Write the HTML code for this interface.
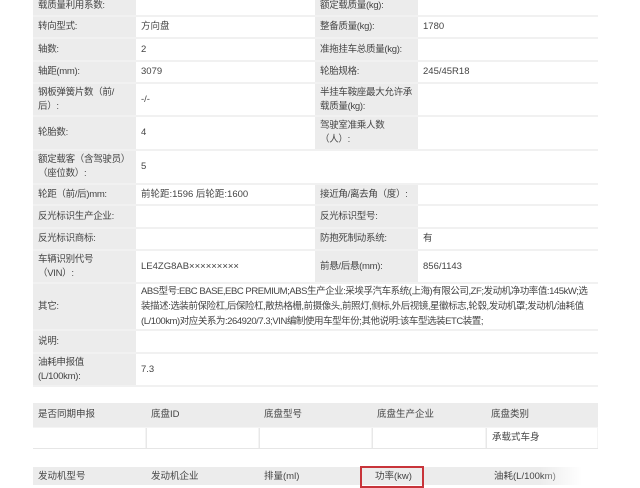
<!DOCTYPE html>
<html><head><meta charset="utf-8"><style>
body{margin:0;width:640px;height:485px;overflow:hidden;background:#fff;font-family:"Liberation Sans","Noto Sans CJK SC",sans-serif;font-size:9.5px;color:#444;position:relative}
.c{position:absolute;box-sizing:border-box;padding:0 5px;display:flex;align-items:center;line-height:14px;overflow:hidden}
.l{background:#ececec;white-space:nowrap;letter-spacing:-0.3px;padding:0 3px 0 5px}
.v{background:#fff}
.o{letter-spacing:-0.45px;line-height:15px}
.line{position:absolute;left:33px;width:565px;height:2px;background:#f1f1f1}
</style></head><body>
<div style="position:absolute;left:597px;top:0;width:1px;height:385px;background:#e4e4e4"></div>
<div id="t"></div>
<script>
var rows=[
[-3,15,"载质量利用系数:","","额定载质量(kg):",""],
[17,37,"转向型式:","方向盘","整备质量(kg):","1780"],
[39,60,"轴数:","2","准拖挂车总质量(kg):",""],
[62,82,"轴距(mm):","3079","轮胎规格:","245/45R18"],
[84,115,"钢板弹簧片数（前/<br>后）:","-/-","半挂车鞍座最大允许承<br>载质量(kg):",""],
[117,149,"轮胎数:","4","驾驶室准乘人数<br>（人）:",""],
[151,183,"额定载客（含驾驶员）<br>（座位数）:","5",null,null],
[185,204,"轮距（前/后)mm:","前轮距:1596 后轮距:1600","接近角/离去角（度）:",""],
[206,227,"反光标识生产企业:","","反光标识型号:",""],
[229,249,"反光标识商标:","","防抱死制动系统:","有"],
[251,282,"车辆识别代号<br>（VIN）:","LE4ZG8AB×××××××××","前悬/后悬(mm):","856/1143"],
[284,329,"其它:","<span class='o'>ABS型号:EBC BASE,EBC PREMIUM;ABS生产企业:采埃孚汽车系统(上海)有限公司,ZF;发动机净功率值:145kW;选装描述:选装前保险杠,后保险杠,散热格栅,前摄像头,前照灯,侧标,外后视镜,星徽标志,轮毂,发动机罩;发动机/油耗值(L/100km)对应关系为:264920/7.3;VIN编制使用车型年份;其他说明:该车型选装ETC装置;</span>",null,null],
[331,352,"说明:","",null,null],
[354,385,"油耗申报值<br>(L/100km):","7.3",null,null]];
var h="";
rows.forEach(function(r){var t=r[0],hh=r[1]-r[0];
h+='<div class="c l" style="left:33px;top:'+t+'px;width:103px;height:'+hh+'px">'+r[2]+'</div>';
if(r[4]===null){h+='<div class="c v" style="left:136px;top:'+t+'px;width:462px;height:'+hh+'px">'+r[3]+'</div>';}
else{h+='<div class="c v" style="left:136px;top:'+t+'px;width:179px;height:'+hh+'px">'+r[3]+'</div>';
h+='<div class="c l" style="left:315px;top:'+t+'px;width:103px;height:'+hh+'px">'+r[4]+'</div>';
h+='<div class="c v" style="left:418px;top:'+t+'px;width:180px;height:'+hh+'px">'+r[5]+'</div>';}
h+='<div class="line" style="top:'+r[1]+'px"></div>';});
var xs=[33,146,259,372,486,598];
var hd=["是否同期申报","底盘ID","底盘型号","底盘生产企业","底盘类别"];
h+='<div style="position:absolute;left:33px;top:403px;width:565px;height:45px;background:#f4f4f4;border-bottom:1px solid #e6e6e6"></div>';
for(var i=0;i<5;i++){h+='<div class="c" style="left:'+xs[i]+'px;top:403px;width:'+(xs[i+1]-xs[i])+'px;height:24px;background:#ececec">'+hd[i]+'</div>';
h+='<div class="c" style="left:'+xs[i]+'px;top:428px;width:'+(xs[i+1]-xs[i]-1)+'px;height:20px;background:#fff;border-left:'+(i?1:0)+'px solid #e8e8e8">'+(i==4?'承载式车身':'')+'</div>';}
h+='<div style="position:absolute;left:33px;top:467px;width:565px;height:18px;background:#ececec"></div>';
var e=[["发动机型号",33],["发动机企业",146],["排量(ml)",259],["功率(kw)",370],["油耗(L/100km)",489]];
e.forEach(function(x){h+='<div class="c" style="left:'+x[1]+'px;top:467px;height:20px;white-space:nowrap">'+x[0]+'</div>';});
h+='<div style="position:absolute;left:360px;top:466px;width:64px;height:22px;border:2px solid #c8343a;box-sizing:border-box"></div>';
h+='<div style="position:absolute;left:540px;top:462px;width:70px;height:23px;background:linear-gradient(90deg,rgba(255,255,255,0),#fff 60%)"></div>';
document.getElementById("t").innerHTML=h;
</script>
</body></html>
